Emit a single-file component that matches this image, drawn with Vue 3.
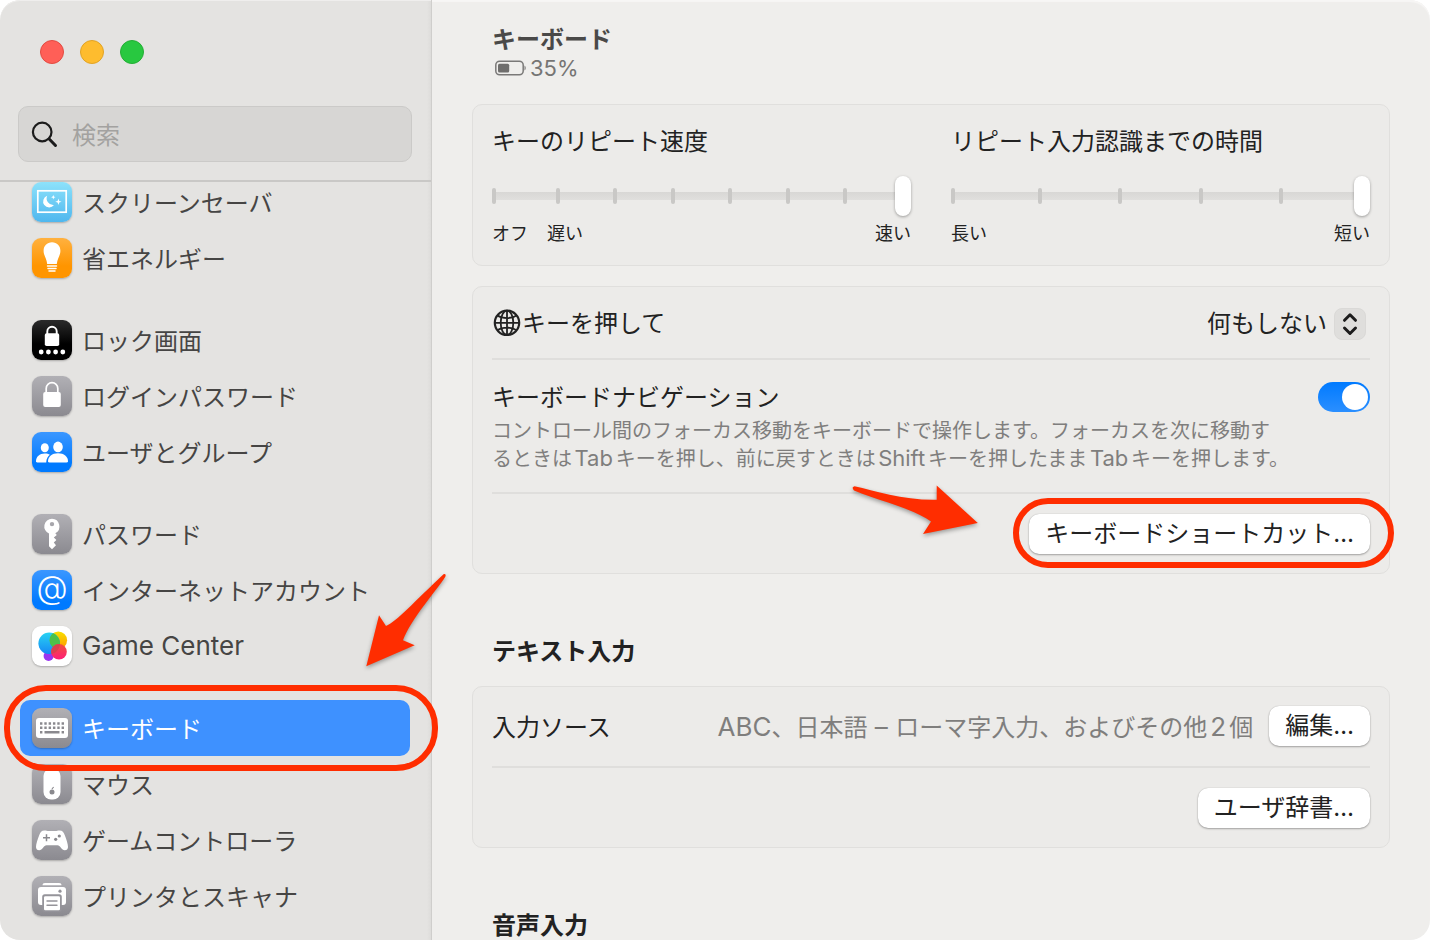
<script setup>
import { ref } from 'vue'

const groups = [
  [
    { id: 'screensaver', label: 'スクリーンセーバ', tone: 'sky' },
    { id: 'energy', label: '省エネルギー', tone: 'orange' },
  ],
  [
    { id: 'lockscreen', label: 'ロック画面', tone: 'black' },
    { id: 'loginpass', label: 'ログインパスワード', tone: 'gray' },
    { id: 'users', label: 'ユーザとグループ', tone: 'blue' },
  ],
  [
    { id: 'passwords', label: 'パスワード', tone: 'gray' },
    { id: 'internet', label: 'インターネットアカウント', tone: 'blue' },
    { id: 'gamecenter', label: 'Game Center', tone: 'white', latin: true },
  ],
  [
    { id: 'keyboard', label: 'キーボード', tone: 'gray', current: true },
    { id: 'mouse', label: 'マウス', tone: 'gray' },
    { id: 'controller', label: 'ゲームコントローラ', tone: 'gray' },
    { id: 'printer', label: 'プリンタとスキャナ', tone: 'gray' },
  ],
]

const query = ref('')
const keyRepeat = ref(7)
const repeatDelay = ref(5)
const globeAction = ref('none')
const keyboardNav = ref(true)

function tickStyle(i, steps) {
  return { left: i === 0 ? '0px' : `calc(6px + (100% - 16px) * ${i} / ${steps})` }
}
</script>

<template>
  <div class="window">
    <aside class="sidebar">
      <header class="sidebar-head">
        <div class="lights">
          <button class="light close" type="button" aria-label="閉じる"></button>
          <button class="light minimize" type="button" aria-label="しまう"></button>
          <button class="light zoom" type="button" aria-label="拡大"></button>
        </div>
        <label class="search">
          <svg width="28" height="28" viewBox="0 0 28 28" fill="none" stroke="#1c1c1c" stroke-linecap="round" aria-hidden="true">
            <circle cx="12.200" cy="12" r="9.300" stroke-width="2.200" />
            <path d="M19.200 19L25.500 25.500" stroke-width="3" />
          </svg>
          <input v-model="query" type="search" placeholder="検索" aria-label="検索" />
        </label>
      </header>

      <nav class="nav">
        <ul v-for="(group, g) in groups" :key="g" class="group">
          <li v-for="item in group" :key="item.id" class="item">
            <a class="row-link" :class="{ current: item.current }" :href="'#' + item.id" :aria-current="item.current ? 'page' : undefined">
              <span class="tile" :class="item.tone">
                <svg width="40" height="40" viewBox="0 0 40 40" fill="#fff" aria-hidden="true">
                  <template v-if="item.id === 'screensaver'">
                    <rect x="5.800" y="8.800" width="28.400" height="21.400" fill="none" stroke="#fff" stroke-width="1.700" />
                    <path d="M15.200 13.800a6.600 6.600 0 0 0 6.800 9.200A6 6 0 1 1 15.200 13.800z" />
                    <path d="M21.300 13l.6 1.600 1.600.6-1.600.6-.6 1.600-.6-1.600-1.600-.6 1.600-.6zM26.400 16.500l.8 2.400 2.400.8-2.400.8-.8 2.400-.8-2.400-2.400-.8 2.400-.8z" />
                  </template>
                  <template v-else-if="item.id === 'energy'">
                    <path d="M20 4.300c-5 0-8.400 3.600-8.400 8.400 0 5 3 7.300 3.600 13.300h9.600c.6-6 3.600-8.300 3.600-13.300 0-4.800-3.400-8.400-8.400-8.400z" />
                    <path d="M15.500 28h9M16 30.500h8M17 33h6" stroke="#fff" stroke-width="1.500" stroke-linecap="round" />
                  </template>
                  <template v-else-if="item.id === 'lockscreen'">
                    <path d="M15.300 14.500V11.500a4.700 4.700 0 0 1 9.400 0v3" fill="none" stroke="#fff" stroke-width="1.900" />
                    <rect x="12.800" y="13.300" width="14.400" height="12.700" rx="1.800" />
                    <circle cx="9.200" cy="32" r="2.400" /><circle cx="16.400" cy="32" r="2.400" /><circle cx="23.600" cy="32" r="2.400" /><circle cx="30.800" cy="32" r="2.400" />
                  </template>
                  <template v-else-if="item.id === 'loginpass'">
                    <path d="M14.200 17v-4.500a5.800 5.800 0 0 1 11.600 0V17" fill="none" stroke="#fff" stroke-width="1.700" />
                    <rect x="11.200" y="16" width="17.600" height="15" rx="2" />
                  </template>
                  <template v-else-if="item.id === 'users'">
                    <ellipse cx="12.800" cy="15.800" rx="4" ry="4.500" />
                    <path d="M4 29.500c0-5 3.600-8 8.800-8 2 0 3.800.5 5.100 1.300-2 1.500-3.500 4-3.700 7.600H5.300c-.8 0-1.300-.3-1.300-.9z" />
                    <ellipse cx="26" cy="14.900" rx="4.800" ry="5.300" />
                    <path d="M16 29.200c0-4.500 4-7.900 10-7.900s10 3.400 10 7.900c0 .8-.5 1.200-1.400 1.200H17.400c-.9 0-1.400-.4-1.400-1.200z" />
                  </template>
                  <template v-else-if="item.id === 'passwords'">
                    <path fill-rule="evenodd" d="M20 4.800a7.700 7.700 0 0 0-3 14.800v12.600l3 3 4-4-2.200-2.600 2.600-2.500-2.600-2.500 3-2.700-1.500-1.600A7.700 7.700 0 0 0 20 4.800zm0 3.100a2.200 2.200 0 1 1 0 4.400 2.200 2.200 0 0 1 0-4.400z" />
                  </template>
                  <text v-else-if="item.id === 'internet'" class="at" x="20" y="29" text-anchor="middle">@</text>
                  <template v-else-if="item.id === 'gamecenter'">
                    <defs>
                      <linearGradient id="gcBlue" x1="0" y1="0" x2="0" y2="1"><stop offset="0" stop-color="#29d3f2" /><stop offset="1" stop-color="#1688f5" /></linearGradient>
                      <linearGradient id="gcYellow" x1="0" y1="0" x2="0" y2="1"><stop offset="0" stop-color="#f7e000" /><stop offset="1" stop-color="#ff9800" /></linearGradient>
                      <linearGradient id="gcPink" x1="0" y1="0" x2="0" y2="1"><stop offset="0" stop-color="#f0503c" /><stop offset="1" stop-color="#ff1e78" /></linearGradient>
                      <clipPath id="gcClip"><circle cx="17.200" cy="17.300" r="10.800" /></clipPath>
                    </defs>
                    <circle cx="16.600" cy="30" r="5" fill="#9a35f0" />
                    <circle cx="26.300" cy="14.300" r="8.800" fill="url(#gcYellow)" />
                    <circle cx="17.200" cy="17.300" r="10.800" fill="url(#gcBlue)" />
                    <circle cx="26.300" cy="14.300" r="8.800" fill="#4cc14a" clip-path="url(#gcClip)" />
                    <circle cx="27" cy="25.700" r="7.800" fill="url(#gcPink)" />
                    <circle cx="27" cy="25.700" r="7.800" fill="#d9404f" clip-path="url(#gcClip)" />
                  </template>
                  <template v-else-if="item.id === 'keyboard'">
                    <rect x="4" y="10" width="32" height="20" rx="3" />
                    <g stroke="#8a898e" stroke-width="2.400">
                      <path d="M8 15.500h24.500M8 19.800h24.500" stroke-dasharray="2.400 1.920" />
                      <path d="M8 24.200h2.400M12.500 24.200h15M29.600 24.200H32" />
                    </g>
                  </template>
                  <template v-else-if="item.id === 'mouse'">
                    <rect x="11.500" y="4.500" width="17" height="31" rx="7.500" />
                    <circle cx="20" cy="28" r="2.500" fill="#8a898e" /><path d="M20 25l1.600-2" stroke="#8a898e" stroke-width="1.200" />
                  </template>
                  <template v-else-if="item.id === 'controller'">
                    <path d="M12.500 10.500c-3 0-4.300 1.800-5.200 4.500C5.600 19.500 4 24 4 27c0 2 1.300 3.300 3.200 3.300 3.200 0 4.600-5 7.300-5h11c2.700 0 4.100 5 7.300 5 1.900 0 3.200-1.300 3.200-3.300 0-3-1.600-7.500-3.300-12-.9-2.700-2.200-4.500-5.200-4.500-2 0-2.500.5-4 .5h-7c-1.500 0-2-.5-4-.5z" />
                    <path d="M14.500 14.300v7M11 17.800h7" stroke="#8a898e" stroke-width="1.500" />
                    <circle cx="27.300" cy="16" r="1.600" fill="#8a898e" /><circle cx="23.700" cy="19.300" r="1.600" fill="#8a898e" />
                  </template>
                  <template v-else>
                    <path d="M10.500 9.300c0-1.600.9-2.400 2.500-2.400h14c1.600 0 2.500.8 2.500 2.400z" />
                    <rect x="6" y="11" width="28" height="18" rx="3" />
                    <rect x="10.200" y="18.300" width="19.600" height="17.500" rx="2.500" fill="#95949a" />
                    <rect x="12" y="20.200" width="16" height="14" rx="1.300" />
                    <circle cx="28" cy="15.200" r="1.600" fill="#95949a" />
                    <path d="M15 25h10M15 29.300h10" stroke="#95949a" stroke-width="1.400" stroke-linecap="round" />
                  </template>
                </svg>
              </span>
              <span :class="{ latin: item.latin }">{{ item.label }}</span>
            </a>
            <template v-if="item.current">
              <span class="ring ring-row"></span>
              <svg class="arrow arrow-row" width="82" height="96" viewBox="366 574 82 96" fill="#ff2d00" aria-hidden="true">
                <path d="M443.500 574.200Q446.500 573.500 445.300 576.800C437 590 411 619 403 640.300L414.700 645.300L366.300 666.300L379 615.300L386 626C396 622 415 601 443.500 574.200z" />
              </svg>
            </template>
          </li>
        </ul>
      </nav>
    </aside>

    <main class="content">
      <header class="page-head">
        <h1>キーボード</h1>
        <p class="battery">
          <svg width="34" height="18" viewBox="0 0 34 18" fill="none" stroke="#7a7978" aria-hidden="true">
            <rect x="3.800" y="2.200" width="27.400" height="13.600" rx="3.800" stroke-width="1.500" />
            <rect x="6" y="4.700" width="11.200" height="8.700" rx="1.500" fill="#6f6e6d" stroke="none" />
            <path d="M32.500 6.500c1.600.8 1.600 4.200 0 5z" fill="#7a7978" stroke="none" />
          </svg>
          <span>35%</span>
        </p>
      </header>

      <section class="card sliders">
        <div class="field">
          <label for="key-repeat">キーのリピート速度</label>
          <div class="slider">
            <span v-for="i in 7" :key="i" class="tick" :style="tickStyle(i - 1, 7)"></span>
            <input id="key-repeat" v-model="keyRepeat" type="range" min="0" max="7" />
          </div>
          <div class="scale"><span>オフ</span><span>遅い</span><span class="end">速い</span></div>
        </div>
        <div class="field">
          <label for="repeat-delay">リピート入力認識までの時間</label>
          <div class="slider">
            <span v-for="i in 5" :key="i" class="tick" :style="tickStyle(i - 1, 5)"></span>
            <input id="repeat-delay" v-model="repeatDelay" type="range" min="0" max="5" />
          </div>
          <div class="scale"><span>長い</span><span class="end">短い</span></div>
        </div>
      </section>

      <section class="card">
        <div class="row compact">
          <label class="globe-label" for="globe-action">
            <svg width="30" height="30" viewBox="0 0 30 30" fill="none" stroke="#222" stroke-width="1.800" aria-hidden="true">
              <circle cx="15" cy="15.800" r="12.200" stroke-width="2.200" />
              <ellipse cx="15" cy="15.800" rx="6.300" ry="12.200" />
              <path d="M15 3.800v24M3 15.800h24M5.500 8.400c5 3.500 14 3.500 19 0M5.500 23.200c5-3.500 14-3.500 19 0" />
            </svg>
            <span>キーを押して</span>
          </label>
          <div class="popup">
            <select id="globe-action" v-model="globeAction">
              <option value="none">何もしない</option>
            </select>
            <span class="popup-cap">
              <svg width="32" height="32" viewBox="0 0 32 32" fill="none" stroke="#1c1c1c" stroke-width="3" stroke-linecap="round" stroke-linejoin="round" aria-hidden="true">
                <path d="M10.500 12.300L16 6.800l5.500 5.500M10.500 20l5.500 5.500 5.500-5.500" />
              </svg>
            </span>
          </div>
        </div>
        <div class="row top">
          <div class="text">
            <label for="keyboard-nav">キーボードナビゲーション</label>
            <p class="note">コントロール間のフォーカス移動をキーボードで操作します。フォーカスを次に移動す<br />るときは<span class="latin">Tab</span>キーを押し、前に戻すときは<span class="latin">Shift</span>キーを押したまま<span class="latin">Tab</span>キーを押します。</p>
          </div>
          <input id="keyboard-nav" v-model="keyboardNav" class="toggle" type="checkbox" role="switch" />
        </div>
        <div class="row end-row">
          <div class="marked">
            <button class="push" type="button">キーボードショートカット<span class="dots">…</span></button>
            <span class="ring ring-button"></span>
            <svg class="arrow arrow-button" width="128" height="54" viewBox="852 485 128 54" fill="#ff2d00" aria-hidden="true">
              <path d="M854.500 486.200C875 490.500 904 500.500 936.700 499.800V485.500L977.800 523L923 534L931 521.500C914 509 880 501 854 490.500Q851 487 854.500 486.200z" />
            </svg>
          </div>
        </div>
      </section>

      <h2>テキスト入力</h2>

      <section class="card">
        <div class="row">
          <span>入力ソース</span>
          <span class="value"><span class="latin">ABC</span>、日本語<span class="latin"> – </span>ローマ字入力、およびその他<span class="latin">2</span>個</span>
          <button class="push" type="button">編集<span class="dots">…</span></button>
        </div>
        <div class="row end-row">
          <button class="push" type="button">ユーザ辞書<span class="dots">…</span></button>
        </div>
      </section>

      <h2>音声入力</h2>
    </main>
  </div>
</template>

<style>
html,
body {
  background: #fff;
}
</style>

<style scoped>
* {
  box-sizing: border-box;
}
.window {
  display: flex;
  min-height: 100vh;
  overflow: hidden;
  border-radius: 20px;
  background: #efeeec;
  box-shadow: inset 0 2px 1px #f7f6f5;
  color: #222;
  font: 24px/32px "Noto Sans CJK JP", Inter, sans-serif;
  text-autospace: normal;
}
h1,
h2,
p,
ul {
  margin: 0;
  padding: 0;
}
button,
input,
select {
  margin: 0;
  font: inherit;
  color: inherit;
}
.latin {
  font-family: Inter, sans-serif;
  font-size: 26px;
}
.dots {
  font-family: Inter, sans-serif;
}

.sidebar {
  position: relative;
  z-index: 1;
  flex: none;
  width: 432px;
  border-right: 1px solid #cfcecc;
  background: linear-gradient(to left, #dddcda, #e4e3e1 4px);
  box-shadow: inset 0 1px 0 #efeeed;
  border-radius: 20px 0 0 20px;
  color: #464544;
}
.sidebar-head {
  padding: 40px 19px 18px 18px;
  border-bottom: 2px solid #c9c8c6;
}
.lights {
  display: flex;
  gap: 16px;
  padding-left: 22px;
}
.light {
  width: 24px;
  height: 24px;
  padding: 0;
  border: 1px solid;
  border-radius: 50%;
}
.close {
  background: #ff5f57;
  border-color: #e24b41;
}
.minimize {
  background: #febc2e;
  border-color: #e1a325;
}
.zoom {
  background: #28c840;
  border-color: #24ae35;
}
.search {
  display: flex;
  align-items: center;
  gap: 14px;
  height: 56px;
  margin-top: 42px;
  padding: 0 11px;
  border: 1px solid #cbcac8;
  border-radius: 10px;
  background: #d7d6d4;
}
.search input {
  flex: 1;
  width: 100%;
  min-width: 0;
  height: 32px;
  padding: 0;
  border: 0;
  outline: 0;
  background: none;
  appearance: none;
}
.search input::placeholder {
  color: #a3a2a0;
  opacity: 1;
}
.nav {
  display: grid;
  gap: 26px;
  margin-top: -8px;
  padding: 0 21px 16px 20px;
}
.group {
  list-style: none;
}
.item {
  position: relative;
}
.row-link {
  display: flex;
  align-items: center;
  gap: 10px;
  height: 56px;
  padding: 0 12px;
  border-radius: 10px;
  color: inherit;
  text-decoration: none;
  white-space: nowrap;
}
.row-link.current {
  background: #3e91ff;
  color: #fff;
}
.item:has(.current) {
  z-index: 1;
}
.tile {
  flex: none;
  width: 40px;
  height: 40px;
  border-radius: 9px;
  box-shadow: 0 1px 2px rgba(0, 0, 0, 0.25);
}
.tile svg {
  display: block;
}
.at {
  font: 300 32px Inter, sans-serif;
}
.sky {
  background: linear-gradient(#8de2fb, #4fb7ee);
}
.orange {
  background: linear-gradient(#ffb13f, #ff9500 70%);
}
.black {
  background: linear-gradient(#2b2b2b, #000 60%);
}
.gray {
  background: linear-gradient(#b1b0b5, #8b8a90);
}
.blue {
  background: linear-gradient(#3b97ff, #007aff 80%);
}
.white {
  background: #fff;
}

.ring {
  position: absolute;
  border: 6px solid #ff2d00;
  border-radius: 42px;
  pointer-events: none;
}
.ring-row {
  inset: -15px -28px -15px -16px;
}
.ring-button {
  inset: -16px -24px -14px -16px;
}
.arrow {
  position: absolute;
  overflow: visible;
  filter: drop-shadow(0 2px 2px rgba(0, 0, 0, 0.35));
  pointer-events: none;
}
.arrow-row {
  left: 346px;
  top: -126px;
}
.arrow-button {
  left: -177px;
  top: -29px;
}

.content {
  flex: 1;
  min-width: 0;
  padding: 22px 40px 0;
}
.page-head {
  padding-left: 20px;
  margin-bottom: 22px;
  color: #4a4948;
}
h1 {
  font-size: 24px;
  line-height: 32px;
  font-weight: 700;
}
.battery {
  display: flex;
  align-items: center;
  gap: 4px;
  color: #767574;
  font-family: Inter, sans-serif;
  font-size: 22px;
  line-height: 28px;
}
h2 {
  margin: 62px 20px 22px;
  font-size: 24px;
  line-height: 28px;
  font-weight: 600;
}
h2:last-child {
  margin-bottom: 0;
}
.card {
  padding: 0 19px;
  border: 1px solid #e0dfdd;
  border-radius: 10px;
  background: #ecebe9;
}
.card + .card {
  margin-top: 20px;
}
.sliders {
  display: grid;
  grid-template-columns: 1fr 1fr;
  gap: 40px;
  padding-top: 19px;
  padding-bottom: 21px;
}
.field > label {
  display: block;
}
.slider {
  position: relative;
  height: 40px;
  margin: 20px 0 4px;
  background: linear-gradient(#d8d7d5, #e0dfdd) center / 100% 8px no-repeat;
}
.tick {
  position: absolute;
  top: 12px;
  width: 4px;
  height: 16px;
  border-radius: 2px;
  background: #c9c8c6;
}
.slider input {
  position: relative;
  display: block;
  width: 100%;
  height: 40px;
  background: none;
  appearance: none;
}
.slider input::-webkit-slider-thumb {
  width: 16px;
  height: 40px;
  border-radius: 8px;
  background: #fff;
  box-shadow: 0 1px 3px rgba(0, 0, 0, 0.35);
  appearance: none;
}
.scale {
  display: flex;
  gap: 19px;
  font-size: 18px;
  line-height: 24px;
}
.end {
  margin-left: auto;
}

.row {
  display: flex;
  align-items: center;
  gap: 16px;
  padding: 19px 0;
}
.row + .row {
  padding-top: 20px;
  border-top: 2px solid #dfdedc;
}
.row:not(:last-child) {
  padding-bottom: 20px;
}
.row.compact {
  justify-content: space-between;
}
.row.top {
  align-items: flex-start;
  justify-content: space-between;
}
.row.end-row {
  justify-content: flex-end;
}
.globe-label {
  display: flex;
  align-items: center;
}
.popup {
  position: relative;
  margin-right: 4px;
}
.popup select {
  display: block;
  height: 32px;
  padding: 0 39px 0 0;
  border: 0;
  background: none;
  appearance: none;
}
.popup-cap {
  position: absolute;
  top: 2px;
  right: 0;
  height: 32px;
  border: 1px solid #dad9d7;
  border-radius: 8px;
  background: #dfdedc;
  pointer-events: none;
}
.popup-cap svg {
  display: block;
  margin: -1px;
}
.text label {
  display: block;
  margin-bottom: 4px;
}
.note {
  color: #7f7e7d;
  font-size: 20px;
  line-height: 28px;
}
.note .latin {
  font-size: 22px;
}
.toggle {
  display: flex;
  flex: none;
  width: 52px;
  height: 30px;
  margin-top: 2px;
  padding: 2px;
  border-radius: 15px;
  background: #c8c7c5;
  appearance: none;
}
.toggle::before {
  content: "";
  width: 26px;
  height: 26px;
  border-radius: 50%;
  background: #fff;
}
.toggle:checked {
  justify-content: flex-end;
  background: linear-gradient(#007aff, #2b8fff);
}
.marked {
  position: relative;
}
.push {
  display: block;
  height: 40px;
  padding: 0 16px 3px;
  border: 0;
  border-radius: 10px;
  background: #fff;
  box-shadow: 0 0 1px rgba(0, 0, 0, 0.25), 0 1px 2px rgba(0, 0, 0, 0.3);
  line-height: 32px;
  white-space: nowrap;
}
.value {
  margin-left: auto;
  color: #7f7e7d;
}
</style>
